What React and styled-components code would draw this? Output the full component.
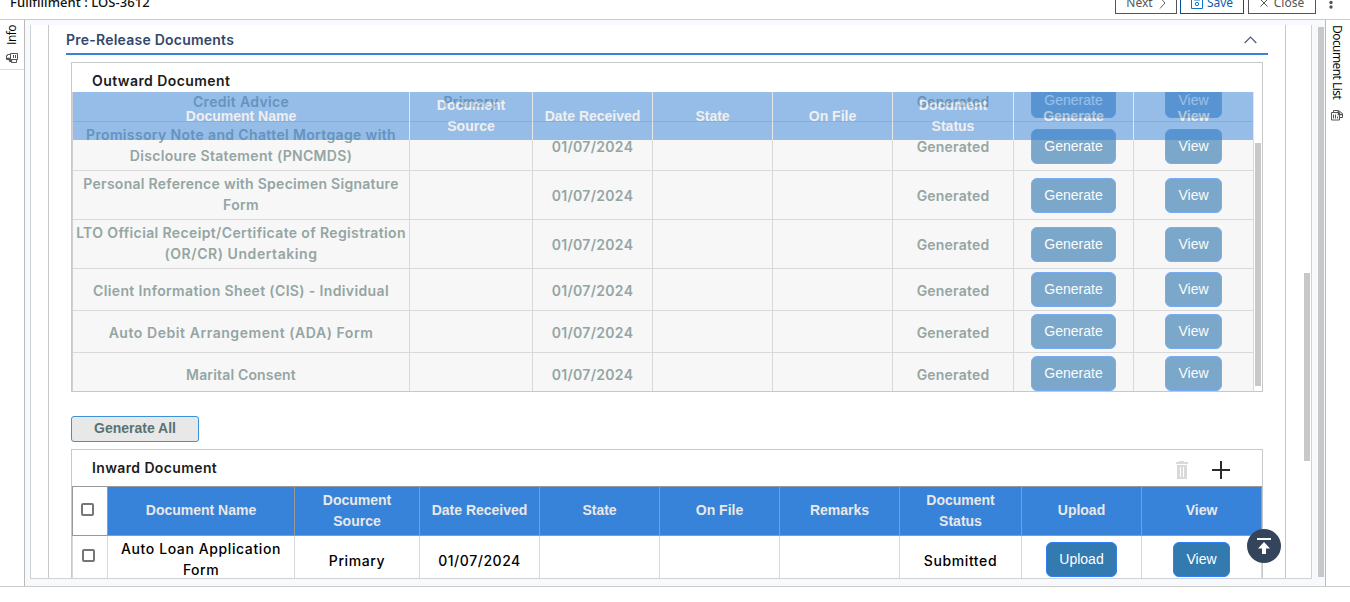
import React from "react";
import styled, { createGlobalStyle, css } from "styled-components";

const Global = createGlobalStyle`
  *, *::before, *::after { box-sizing: border-box; }
  body { margin: 0; background: #fff; overflow: hidden; }
  button { margin: 0; cursor: pointer; }
`;

const ui = '"Noto Sans", "Open Sans", sans-serif';
const brand = 'Inter, "Open Sans", sans-serif';
const arial = '"Liberation Sans", Arial, sans-serif';

const Page = styled.div`
  width: 1350px;
  height: 602px;
  display: flex;
  flex-direction: column;
  overflow: hidden;
  background: #fff;
`;

const TopBar = styled.header`
  height: 20px;
  flex: none;
  display: flex;
  align-items: flex-end;
  padding: 0 19px 5px 10px;
  border-bottom: 1px solid #ccc;
  overflow: hidden;
`;

const Title = styled.h1`
  margin: 0 auto 2px 0;
  font: 500 13px/20px ${ui};
  letter-spacing: ${(p) => p.$track};
  color: #111;
  white-space: nowrap;
`;

const ToolButton = styled.button`
  width: ${(p) => p.$w}px;
  height: 27px;
  flex: none;
  display: flex;
  align-items: center;
  justify-content: center;
  gap: ${(p) => p.$gap || 5}px;
  margin-left: ${(p) => p.$ml || 0}px;
  padding: 5px 0 0;
  border: 1px solid ${(p) => (p.$primary ? "#00529b" : "#555")};
  background: #fff;
  color: ${(p) => (p.$primary ? "#0a5ea8" : "#555")};
  font: 400 12px/20px ${ui};
`;

const Dots = styled.div`
  width: 14px;
  height: 18px;
  flex: none;
  display: flex;
  margin: 0 -7px 0 8px;
`;

const Body = styled.div`
  height: 567px;
  flex: none;
  display: flex;
  border-bottom: 1px solid #ccc;
`;

const Rail = styled.nav`
  width: 25px;
  flex: none;
  background: #fff;
  ${(p) => (p.$right ? "border-left: 1px solid #bbb;" : "border-right: 1px solid #bbb;")}
`;

const RailItem = styled.div`
  height: ${(p) => p.$h}px;
  display: flex;
  flex-direction: column;
  align-items: center;
  gap: ${(p) => p.$gap}px;
  padding: 5px ${(p) => p.$pr || 0}px 0 ${(p) => p.$pl || 0}px;
  border-bottom: ${(p) => (p.$line ? "1px solid #ddd" : "0")};
`;

const RailLabel = styled.span`
  writing-mode: vertical-rl;
  ${(p) => p.$up && "transform: rotate(180deg);"}
  font: 400 12px/16px "Open Sans", sans-serif;
  letter-spacing: ${(p) => p.$track || 0}px;
  color: #000;
  white-space: nowrap;
`;

const Main = styled.main`
  width: 1300px;
  flex: none;
  display: flex;
  padding: 5px 1px 7px 5px;
  background: #f7f9fc;
`;

const Thumb = styled.div`
  width: 6px;
  height: ${(p) => p.$h}px;
  flex: none;
  margin: ${(p) => p.$m || 0};
  background: #c8c8c8;
`;

const Panel = styled.section`
  width: 1282px;
  height: 554px;
  flex: none;
  display: flex;
  padding-left: 17px;
  border: 1px solid #d0d3d6;
  border-top: 0;
  background: #fff;
`;

const Section = styled.div`
  width: 1238px;
  flex: none;
  padding: 0 17px;
  border: solid #c8c8c8;
  border-width: 0 1px;
  overflow: hidden;
`;

const SectionHead = styled.div`
  height: 30px;
  display: flex;
  align-items: center;
  justify-content: space-between;
  padding: 2px 11px 0 0;
  border-bottom: 2px solid #3883da;
`;

const SectionTitle = styled.h2`
  margin: 0;
  font: 600 14px/20px ${brand};
  letter-spacing: ${(p) => p.$track}px;
  color: #33486b;
`;

const Card = styled.section`
  width: 1192px;
  height: ${(p) => p.$h}px;
  margin: ${(p) => p.$m};
  border: 1px solid #c8c8c8;
  overflow: hidden;
`;

const CardHead = styled.div`
  height: ${(p) => p.$h}px;
  display: flex;
  align-items: center;
  padding: ${(p) => p.$pad};
`;

const CardTitle = styled.h3`
  margin: 0 auto ${(p) => p.$mb || 0}px 0;
  font: 600 14px/20px ${brand};
  letter-spacing: ${(p) => p.$track}px;
  color: #1c1c1c;
`;

const Viewport = styled.div`
  display: grid;
  grid-template-columns: 1182px 6px;
  column-gap: 1px;
  height: 299px;
  overflow: hidden;
`;

const ScrollArea = styled.div`
  display: grid;
  grid-template-rows: 299px;
  border-left: 1px solid #d0d0d0;
  overflow: hidden;
`;

const Rows = styled.div`
  grid-area: 1 / 1;
  margin-top: -12px;
`;

const outwardColumns = "337px 123px 120px 120px 120px 121px 120px 120px";
const inwardColumns = "36px 187px 125px 120px 120px 120px 120px 122px 120px 120px";

const Row = styled.div`
  display: grid;
  grid-template-columns: ${outwardColumns};
  height: ${(p) => p.$h}px;
`;

const OverlayHeader = styled(Row)`
  grid-area: 1 / 1;
  position: relative;
  z-index: 1;
  opacity: 0.5;
  background: #3883da;
`;

const headText = css`
  font: 700 14px/21px ${arial};
  color: #e8e8e8;
`;

const Cell = styled.div`
  display: flex;
  align-items: center;
  justify-content: center;
  text-align: center;
  white-space: pre-line;
  border: solid #d9d9d9;
  border-width: 0 1px 1px 0;
  background: #f7f7f7;
  color: #94a5a3;
  font: 600 14px/21px ${brand};
  padding: ${(p) => p.$pt || 0}px 0 ${(p) => p.$pb || 0}px;
`;

const OverlayCell = styled.div`
  display: flex;
  align-items: center;
  justify-content: center;
  text-align: center;
  white-space: pre-line;
  border-right: 1px solid #f4f4f4;
  ${headText}
`;

const Line = styled.span`
  display: block;
  white-space: nowrap;
  letter-spacing: ${(p) => p.$track}px;
`;

const Action = styled.button`
  width: ${(p) => p.$w}px;
  height: 35px;
  padding: 0 0 1px;
  border: 1px solid #2f80f5;
  border-radius: 6px;
  background: #337ab0;
  color: #fff;
  font: 400 14px/20px ${arial};
  opacity: ${(p) => (p.$muted ? 0.63 : 1)};
`;

const GenerateAll = styled.button`
  display: block;
  width: 128px;
  height: 26px;
  margin: 24px 0 0 5px;
  padding: 0 0 2px;
  border: 1px solid #3a93d8;
  border-radius: 3px;
  background: #e8e8e8;
  color: #587372;
  font: 700 14px/20px ${arial};
`;

const InHeader = styled.div`
  display: grid;
  grid-template-columns: ${inwardColumns};
  height: 50px;
`;

const InHeadCell = styled.div`
  display: flex;
  align-items: center;
  justify-content: center;
  text-align: center;
  white-space: pre-line;
  border: solid #999;
  border-width: 1px 1px 1px 0;
  ${headText}
  padding-bottom: 1px;
  background: ${(p) => (p.$plain ? "#fff" : "#3883da")};
  ${(p) => p.$plain && "border-left-width: 1px;"}
`;

const InRow = styled.div`
  display: grid;
  grid-template-columns: ${inwardColumns};
  height: 47px;
`;

const InCell = styled(Cell)`
  background: #fff;
  color: #000;
  font-weight: 500;
  ${(p) => p.$first && "border-left-width: 1px;"}
`;

const Check = styled.span`
  width: 13px;
  height: 13px;
  margin: ${(p) => p.$m};
  border: 2px solid #767676;
  border-radius: 2px;
  background: #fff;
`;

const ToTop = styled.button`
  position: absolute;
  left: 1247px;
  top: 529px;
  width: 34px;
  height: 34px;
  padding: 0;
  border: 0;
  border-radius: 50%;
  background: #34445a;
  display: grid;
  place-items: center;
`;

const outwardHead = [
  "Document Name",
  "Document\nSource",
  "Date Received",
  "State",
  "On File",
  "Document\nStatus",
  "Generate",
  "View",
];

const outwardRows = [
  { h: 42, lines: [["Credit Advice", 0.33]], source: "Primary" },
  { h: 49, lines: [["Promissory Note and Chattel Mortgage with", 0.36], ["Discloure Statement (PNCMDS)", 0.33]] },
  { h: 49, lines: [["Personal Reference with Specimen Signature", 0.27], ["Form", 0.3]] },
  { h: 49, lines: [["LTO Official Receipt/Certificate of Registration", 0.37], ["(OR/CR) Undertaking", 0.56]] },
  { h: 42, lines: [["Client Information Sheet (CIS) - Individual", 0.36]] },
  { h: 42, lines: [["Auto Debit Arrangement (ADA) Form", 0.56]] },
  { h: 42, lines: [["Marital Consent", 0.16]] },
];

const inwardHead = [
  "Document Name",
  "Document\nSource",
  "Date Received",
  "State",
  "On File",
  "Remarks",
  "Document\nStatus",
  "Upload",
  "View",
];

function CardsIcon() {
  return (
    <svg width="13" height="11" viewBox="0 0 13 11" fill="none" stroke="#555">
      <path d="M4.500 .5h7v6h-7z" />
      <path d="M7.500 2v3M9.500 2v3" />
      <path d="M4.500 1.500h-3v1h-1v4h3v2h2v1h5v-3" />
      <path d="M1 5.500h2.500v2h2V9" strokeWidth="1.400" />
    </svg>
  );
}

function DocsIcon() {
  return (
    <svg width="12" height="11" viewBox="0 0 12 11" fill="none" stroke="#555">
      <path d="M.5 2.500h8v7.500h-8z" />
      <path d="M2.500 4.500v4M4.500 4.500v4M6.500 6.500v2" />
      <path d="M2.500 2V.5h5l4 3v4H9" />
      <path d="M7.500 1v3.500h4" strokeWidth="1.600" />
    </svg>
  );
}

export default function App() {
  return (
    <Page>
      <Global />
      <TopBar>
        <Title $track="0.06px">Fullfillment : LOS-3612</Title>
        <ToolButton $w={62} $gap={6}>
          Next
          <svg width="7" height="12" viewBox="0 0 7 12" fill="none" stroke="#666">
            <path d="M1 .5 6 6 1 11.500" />
          </svg>
        </ToolButton>
        <ToolButton $w={64} $ml={3} $gap={4} $primary>
          <svg width="12" height="12" viewBox="0 0 12 12" fill="none" stroke="#0a74c8">
            <path d="M.5.5h11v11H.5zM3 .5v2.500h6V.5" />
            <circle cx="6" cy="7" r="1.700" />
          </svg>
          Save
        </ToolButton>
        <ToolButton $w={68} $ml={4} $gap={6}>
          <svg width="8" height="8" viewBox="0 0 8 8" fill="none" stroke="#555">
            <path d="M.5.5l7 7M7.500.5l-7 7" />
          </svg>
          Close
        </ToolButton>
        <Dots>
          <svg width="14" height="18" viewBox="0 0 14 18" fill="#555">
            <circle cx="7" cy="1.500" r="1.700" />
            <circle cx="7" cy="6.500" r="1.700" />
            <circle cx="7" cy="11" r="1.700" />
          </svg>
        </Dots>
      </TopBar>
      <Body>
        <Rail>
          <RailItem $h={50} $gap={8} $line>
            <RailLabel $up $track={-0.5}>Info</RailLabel>
            <CardsIcon />
          </RailItem>
        </Rail>
        <Main>
          <Panel>
            <Section>
              <SectionHead>
                <SectionTitle $track={0.23}>Pre-Release Documents</SectionTitle>
                <svg width="13" height="8" viewBox="0 0 13 8" fill="none" stroke="#4a5b7c" strokeWidth="1.200">
                  <path d="M.7 7 6.500 1l5.800 6" />
                </svg>
              </SectionHead>
              <Card $h={330} $m="7px 0 0 5px">
                <CardHead $h={29} $pad="7px 0 0 20px">
                  <CardTitle $track={0.42}>Outward Document</CardTitle>
                </CardHead>
                <Viewport>
                  <ScrollArea>
                    <Rows>
                      {outwardRows.map((r) => (
                        <Row key={r.lines[0][0]} $h={r.h}>
                          <Cell $pt={r.lines.length === 1 ? 2 : 0} $pb={r.lines.length === 1 ? 0 : 2}>
                            <div>
                              {r.lines.map(([t, track]) => (
                                <Line key={t} $track={track}>{t}</Line>
                              ))}
                            </div>
                          </Cell>
                          <Cell $pt={2}><Line $track={0.3}>{r.source}</Line></Cell>
                          <Cell $pt={1}><Line $track={0.3}>{r.source ? "" : "01/07/2024"}</Line></Cell>
                          <Cell />
                          <Cell />
                          <Cell $pt={1}><Line $track={0.2}>Generated</Line></Cell>
                          <Cell><Action $w={85} $muted>Generate</Action></Cell>
                          <Cell><Action $w={57} $muted>View</Action></Cell>
                        </Row>
                      ))}
                    </Rows>
                    <OverlayHeader $h={48}>
                      {outwardHead.map((t) => (
                        <OverlayCell key={t}>{t}</OverlayCell>
                      ))}
                    </OverlayHeader>
                  </ScrollArea>
                  <Thumb $h={243} $m="51px 0 0" />
                </Viewport>
              </Card>
              <GenerateAll>Generate All</GenerateAll>
              <Card $h={200} $m="7px 0 0 5px">
                <CardHead $h={36} $pad="4px 32px 0 20px">
                  <CardTitle $track={0.38} $mb={4}>Inward Document</CardTitle>
                  <svg width="54" height="20" viewBox="0 0 54 20">
                    <path d="M3 1h5v1h4v2H0V2h3zM1 5h10v14H1z" fill="#d9d9d9" />
                    <path d="M4.500 7v10M7.500 7v10" stroke="#fff" />
                    <path d="M36 10h18M45 1v18" stroke="#2b2b2b" strokeWidth="2" />
                  </svg>
                </CardHead>
                <InHeader>
                  <InHeadCell $plain><Check $m="0 5px 2px 0" /></InHeadCell>
                  {inwardHead.map((t) => (
                    <InHeadCell key={t}>{t}</InHeadCell>
                  ))}
                </InHeader>
                <InRow>
                  <InCell $first><Check $m="0 3px 7px 0" /></InCell>
                  <InCell>
                    <div>
                      <Line $track={0.6}>Auto Loan Application</Line>
                      <Line $track={0.5}>Form</Line>
                    </div>
                  </InCell>
                  <InCell $pt={3}><Line $track={0.6}>Primary</Line></InCell>
                  <InCell $pt={3}><Line $track={0.55}>01/07/2024</Line></InCell>
                  <InCell />
                  <InCell />
                  <InCell />
                  <InCell $pt={3}><Line $track={0.6}>Submitted</Line></InCell>
                  <InCell><Action $w={71}>Upload</Action></InCell>
                  <InCell><Action $w={57}>View</Action></InCell>
                </InRow>
              </Card>
            </Section>
            <Thumb $h={188} $m="248px 0 0 18px" />
          </Panel>
          <Thumb $h={550} $m="2px 0 0 6px" />
        </Main>
        <Rail $right>
          <RailItem $h={110} $gap={11} $pr={2}>
            <RailLabel $track={-0.52}>Document List</RailLabel>
            <DocsIcon />
          </RailItem>
        </Rail>
      </Body>
      <ToTop aria-label="Back to top">
        <svg width="16" height="18" viewBox="0 0 16 18" fill="#fff">
          <path d="M1 1h14v2H1zM8 5l6 6.500h-4V17H6v-5.500H2z" />
        </svg>
      </ToTop>
    </Page>
  );
}
